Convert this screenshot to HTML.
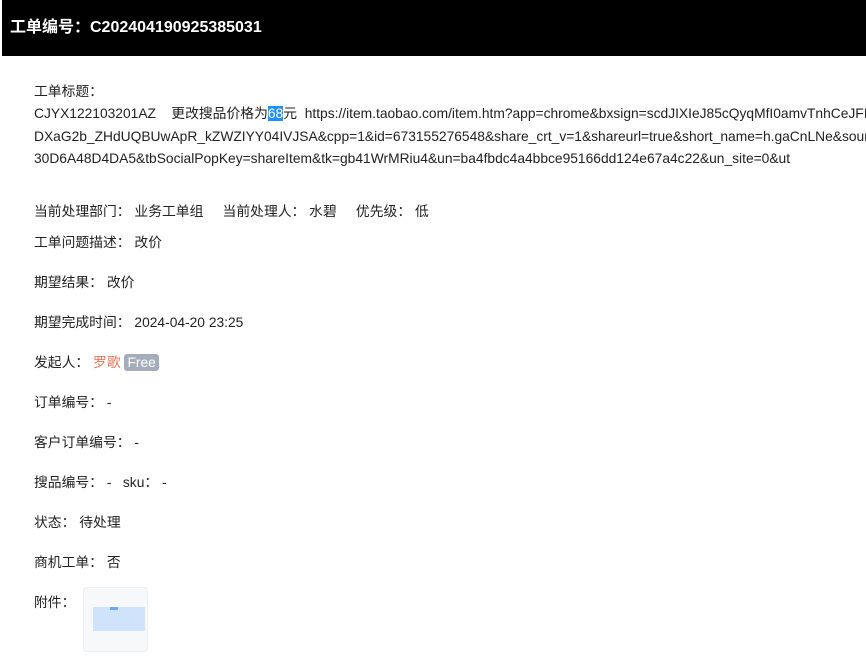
<!DOCTYPE html>
<html><head><meta charset="utf-8"><style>
body{margin:0;width:866px;height:657px;overflow:hidden;background:#fff;font-family:"Liberation Sans","Noto Sans CJK SC",sans-serif;font-size:13.8px;color:#222;position:relative}
.hd{position:absolute;left:2px;top:0;width:864px;height:56px;background:#000;color:#fff;font-weight:bold;font-size:16px;line-height:56px;padding-left:8px;box-sizing:border-box}
.t{position:absolute;left:34px;top:81px;line-height:22.4px;white-space:nowrap}
.r{position:absolute;left:34px;white-space:nowrap;line-height:20px}
.sel{background:#1e90ff;color:#fff}
.free{background:#a5adbd;color:#fff;border-radius:3px;padding:1px 3px}
.thumb{position:absolute;left:83px;top:587px;width:63px;height:63px;border:1px solid #eee;border-radius:4px;background:#f7f8fa}
</style></head><body>
<div class="hd">工单编号：C202404190925385031</div>
<div class="t">工单标题：<br>CJYX122103201AZ&nbsp;&nbsp;&nbsp;&nbsp;更改搜品价格为<span class="sel">68</span>元&nbsp;&nbsp;https://item.taobao.com/item.htm?app=chrome&amp;bxsign=scdJIXIeJ85cQyqMfI0amvTnhCeJFII<br>DXaG2b_ZHdUQBUwApR_kZWZIYY04IVJSA&amp;cpp=1&amp;id=673155276548&amp;share_crt_v=1&amp;shareurl=true&amp;short_name=h.gaCnLNe&amp;source<br>30D6A48D4DA5&amp;tbSocialPopKey=shareItem&amp;tk=gb41WrMRiu4&amp;un=ba4fbdc4a4bbce95166dd124e67a4c22&amp;un_site=0&amp;ut</div>
<div class="r" style="top:202px">当前处理部门：&nbsp;业务工单组&nbsp;&nbsp;&nbsp;&nbsp;&nbsp;当前处理人：&nbsp;水碧&nbsp;&nbsp;&nbsp;&nbsp;&nbsp;优先级：&nbsp;低</div>
<div class="r" style="top:233px">工单问题描述：&nbsp;改价</div>
<div class="r" style="top:273px">期望结果：&nbsp;改价</div>
<div class="r" style="top:313px">期望完成时间：&nbsp;2024-04-20 23:25</div>
<div class="r" style="top:353px">发起人：&nbsp;<span style="color:#e8775a">罗歌</span> <span class="free">Free</span></div>
<div class="r" style="top:393px">订单编号：&nbsp;-</div>
<div class="r" style="top:433px">客户订单编号：&nbsp;-</div>
<div class="r" style="top:473px">搜品编号：&nbsp;-&nbsp;&nbsp;&nbsp;sku：&nbsp;-</div>
<div class="r" style="top:513px">状态：&nbsp;待处理</div>
<div class="r" style="top:553px">商机工单：&nbsp;否</div>
<div class="r" style="top:593px">附件：</div>
<div class="thumb"><div style="position:absolute;left:9px;top:19px;width:52px;height:24px;background:#cfe4fb"></div><div style="position:absolute;left:26px;top:19px;width:8px;height:3px;background:#6aa8ef"></div></div>
</body></html>
